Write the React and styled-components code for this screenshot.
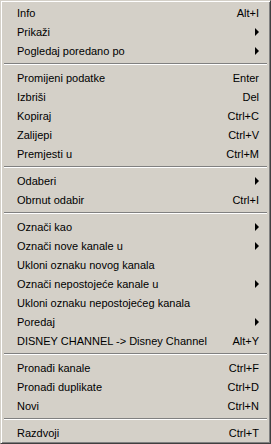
import styled, { createGlobalStyle } from "styled-components";

const GlobalStyle = createGlobalStyle`
  html, body {
    margin: 0;
    padding: 0;
    background: #d4d0c8;
  }
`;

const sections = [
  [
    { label: "Info", shortcut: "Alt+I" },
    { label: "Prikaži", sub: true },
    { label: "Pogledaj poredano po", sub: true },
  ],
  [
    { label: "Promijeni podatke", shortcut: "Enter" },
    { label: "Izbriši", shortcut: "Del" },
    { label: "Kopiraj", shortcut: "Ctrl+C" },
    { label: "Zalijepi", shortcut: "Ctrl+V" },
    { label: "Premjesti u", shortcut: "Ctrl+M" },
  ],
  [
    { label: "Odaberi", sub: true },
    { label: "Obrnut odabir", shortcut: "Ctrl+I" },
  ],
  [
    { label: "Označi kao", sub: true },
    { label: "Označi nove kanale u", sub: true },
    { label: "Ukloni oznaku novog kanala" },
    { label: "Označi nepostojeće kanale u", sub: true },
    { label: "Ukloni oznaku nepostojećeg kanala" },
    { label: "Poredaj", sub: true },
    { label: "DISNEY CHANNEL -> Disney Channel", shortcut: "Alt+Y" },
  ],
  [
    { label: "Pronađi kanale", shortcut: "Ctrl+F" },
    { label: "Pronađi duplikate", shortcut: "Ctrl+D" },
    { label: "Novi", shortcut: "Ctrl+N" },
  ],
  [{ label: "Razdvoji", shortcut: "Ctrl+T" }],
];

export default function App() {
  return (
    <>
      <GlobalStyle />
      <Menu>
        {sections.map((items, i) => (
          <Section key={i}>
            {i > 0 && <Separator />}
            {items.map((item) => (
              <Item key={item.label}>
                <Label>{item.label}</Label>
                {item.shortcut && <Shortcut>{item.shortcut}</Shortcut>}
                {item.sub && <Arrow />}
              </Item>
            ))}
          </Section>
        ))}
      </Menu>
    </>
  );
}

const Menu = styled.div`
  width: 271px;
  height: 444px;
  box-sizing: border-box;
  background: #d4d0c8;
  border-top: 1px solid #d4d0c8;
  border-left: 1px solid #d4d0c8;
  border-right: 1px solid #404040;
  border-bottom: 1px solid #404040;
  box-shadow: inset 1px 1px 0 #ffffff, inset -1px -1px 0 #808080;
  padding: 2px 2px;
  font-family: Tahoma, "Liberation Sans", Arial, sans-serif;
  font-size: 11px;
  color: #000;
  display: flex;
  flex-direction: column;
`;

const Section = styled.div`
  display: flex;
  flex-direction: column;
`;

const Item = styled.div`
  height: 19px;
  display: flex;
  align-items: center;
  padding: 0 6px 0 14px;
`;

const Label = styled.span`
  flex: 1;
  white-space: nowrap;
`;

const Shortcut = styled.span`
  white-space: nowrap;
  margin-right: 3px;
`;

const Arrow = styled.span`
  width: 0;
  height: 0;
  margin-right: 3px;
  border-top: 4px solid transparent;
  border-bottom: 4px solid transparent;
  border-left: 4px solid #000;
`;

const Separator = styled.div`
  height: 0;
  margin: 3px 1px 3px 1px;
  border-top: 1px solid #808080;
  border-bottom: 1px solid #ffffff;
`;
